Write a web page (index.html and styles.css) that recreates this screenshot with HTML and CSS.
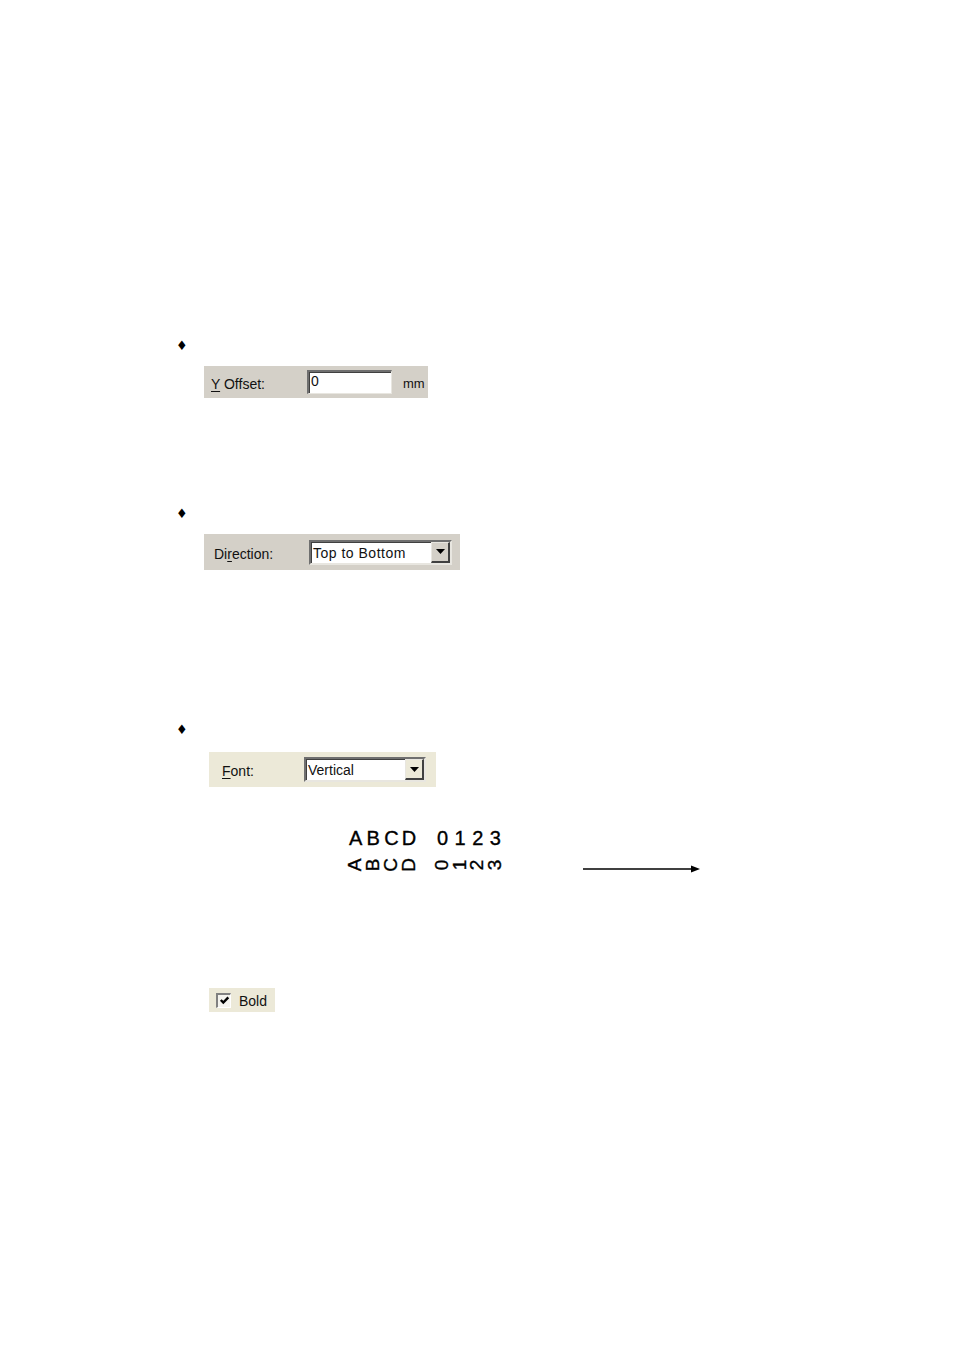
FILE: index.html
```html
<!DOCTYPE html>
<html>
<head>
<meta charset="utf-8">
<link rel="stylesheet" href="styles.css">
</head>
<body>
<div class="page">
  <div class="bullet b1">♦</div>
  <div class="panel p1">
    <span class="lbl l1"><u>Y</u> Offset:</span>
    <span class="edit">0</span>
    <span class="unit">mm</span>
  </div>

  <div class="bullet b2">♦</div>
  <div class="panel p2">
    <span class="lbl l2">Di<u>r</u>ection:</span>
    <span class="combo c2"><span class="ctext">Top to Bottom</span><span class="dd"><svg width="9" height="5" viewBox="0 0 9 5"><path d="M0 0H9L4.5 5Z" fill="#000"/></svg></span></span>
  </div>

  <div class="bullet b3">♦</div>
  <div class="panel xp p3">
    <span class="lbl l3"><u>F</u>ont:</span>
    <span class="combo c3"><span class="ctext">Vertical</span><span class="dd"><svg width="9" height="5" viewBox="0 0 9 5"><path d="M0 0H9L4.5 5Z" fill="#000"/></svg></span></span>
  </div>

  <div class="sample">
    <div class="row r1">
      <span class="ch">A</span><span class="ch">B</span><span class="ch">C</span><span class="ch">D</span><span class="ch"></span><span class="ch">0</span><span class="ch">1</span><span class="ch">2</span><span class="ch">3</span>
    </div>
    <div class="row r2">
      <span class="ch"><span class="rot">A</span></span><span class="ch"><span class="rot">B</span></span><span class="ch"><span class="rot">C</span></span><span class="ch"><span class="rot">D</span></span><span class="ch"></span><span class="ch"><span class="rot">0</span></span><span class="ch"><span class="rot">1</span></span><span class="ch"><span class="rot">2</span></span><span class="ch"><span class="rot">3</span></span>
      <svg class="arrow" width="118" height="10" viewBox="0 0 118 10"><line x1="0" y1="5" x2="110" y2="5" stroke="#000" stroke-width="1.3"/><path d="M108 1.5L117 5L108 8.5Z" fill="#000"/></svg>
    </div>
  </div>

  <div class="panel xp bold">
    <span class="chk"><svg width="11" height="11" viewBox="0 0 11 11"><polyline points="1.8,5 4.3,7.6 9.3,2.4" fill="none" stroke="#000" stroke-width="2.4"/></svg></span>
    <span class="blbl">Bold</span>
  </div>
</div>
</body>
</html>
```

FILE: styles.css
```css
html, body {
  margin: 0;
  padding: 0;
  background: #fff;
}
.page {
  width: 954px;
  height: 1351px;
  padding-top: 339px;
  box-sizing: border-box;
  font-family: "Liberation Sans", Arial, sans-serif;
  color: #000;
}
.bullet {
  margin-left: 176px;
  font-family: "DejaVu Sans", sans-serif;
  font-size: 13px;
  line-height: 14px;
  height: 14px;
}
.b2 { margin-top: 109px; }
.b3 { margin-top: 153px; }

.panel {
  display: flex;
  align-items: center;
  background: #d4d0c8;
  box-sizing: border-box;
  font-size: 14px;
  letter-spacing: 0;
  color: #111;
}
.panel.xp { background: #ece9d8; }
.lbl u { text-decoration-thickness: 1px; text-underline-offset: 2px; }
.lbl { padding-top: 3px; }

.p1 {
  margin-top: 13px;
  margin-left: 204px;
  width: 224px;
  height: 32px;
  padding-left: 7px;
}
.l1 { width: 96px; }
.edit {
  width: 85px;
  height: 24px;
  box-sizing: border-box;
  background: #fff;
  border-top: 2px solid #6f6f6f;
  border-left: 2px solid #6f6f6f;
  border-right: 1px solid #e8e6e0;
  border-bottom: 1px solid #e8e6e0;
  box-shadow: inset 1px 1px 0 #404040;
  padding-left: 2px;
  line-height: 18px;
  font-size: 14px;
}
.unit { margin-left: 11px; font-size: 13px; padding-top: 3px; }

.p2 {
  margin-top: 13px;
  margin-left: 204px;
  width: 256px;
  height: 36px;
  padding-left: 10px;
}
.l2 { width: 95px; }
.combo {
  display: flex;
  align-items: center;
  justify-content: space-between;
  height: 25px;
  box-sizing: border-box;
  background: #fff;
  border-top: 2px solid #6f6f6f;
  border-left: 2px solid #6f6f6f;
  border-right: 2px solid #e8e6e0;
  border-bottom: 2px solid #e8e6e0;
  box-shadow: inset 1px 1px 0 #404040;
  padding-left: 2px;
}
.c2 { width: 143px; }
.c3 { width: 122px; }
.ctext { line-height: 18px; padding-top: 1px; }
.c2 .ctext { letter-spacing: 0.5px; }
.dd {
  width: 19px;
  height: 21px;
  box-sizing: border-box;
  background: #d4d0c8;
  border-top: 1px solid #e8e6e0;
  border-left: 1px solid #e8e6e0;
  border-right: 2px solid #404040;
  border-bottom: 2px solid #404040;
  display: flex;
  align-items: center;
  justify-content: center;
}
.p3 .dd { background: #ece9d8; }

.p3 {
  margin-top: 15px;
  margin-left: 209px;
  width: 227px;
  height: 35px;
  padding-left: 13px;
}
.l3 { width: 82px; }

.sample {
  margin-top: 38px;
  margin-left: 349px;
  font-family: "Liberation Sans", Arial, sans-serif;
  font-size: 20px;
  -webkit-text-stroke: 0.35px #000;
}
.row {
  display: flex;
  align-items: center;
}
.r1 { height: 27px; line-height: 27px; }
.r2 { height: 26px; }
.ch {
  width: 17.6px;
  flex: none;
  display: inline-flex;
  justify-content: flex-start;
}
.rot {
  display: inline-block;
  transform: rotate(-90deg);
  line-height: 16px;
  font-size: 19px;
}
.arrow { margin-left: 76px; margin-top: 8px; }

.bold {
  margin-top: 110px;
  margin-left: 209px;
  width: 66px;
  height: 24px;
  padding-left: 7px;
}
.chk {
  width: 15px;
  height: 15px;
  box-sizing: border-box;
  background: #f4f3ee;
  border-top: 2px solid #808080;
  border-left: 2px solid #808080;
  border-right: 1px solid #fff;
  border-bottom: 1px solid #fff;
  display: flex;
  align-items: center;
  justify-content: center;
}
.blbl { margin-left: 8px; padding-top: 2px; }
```
